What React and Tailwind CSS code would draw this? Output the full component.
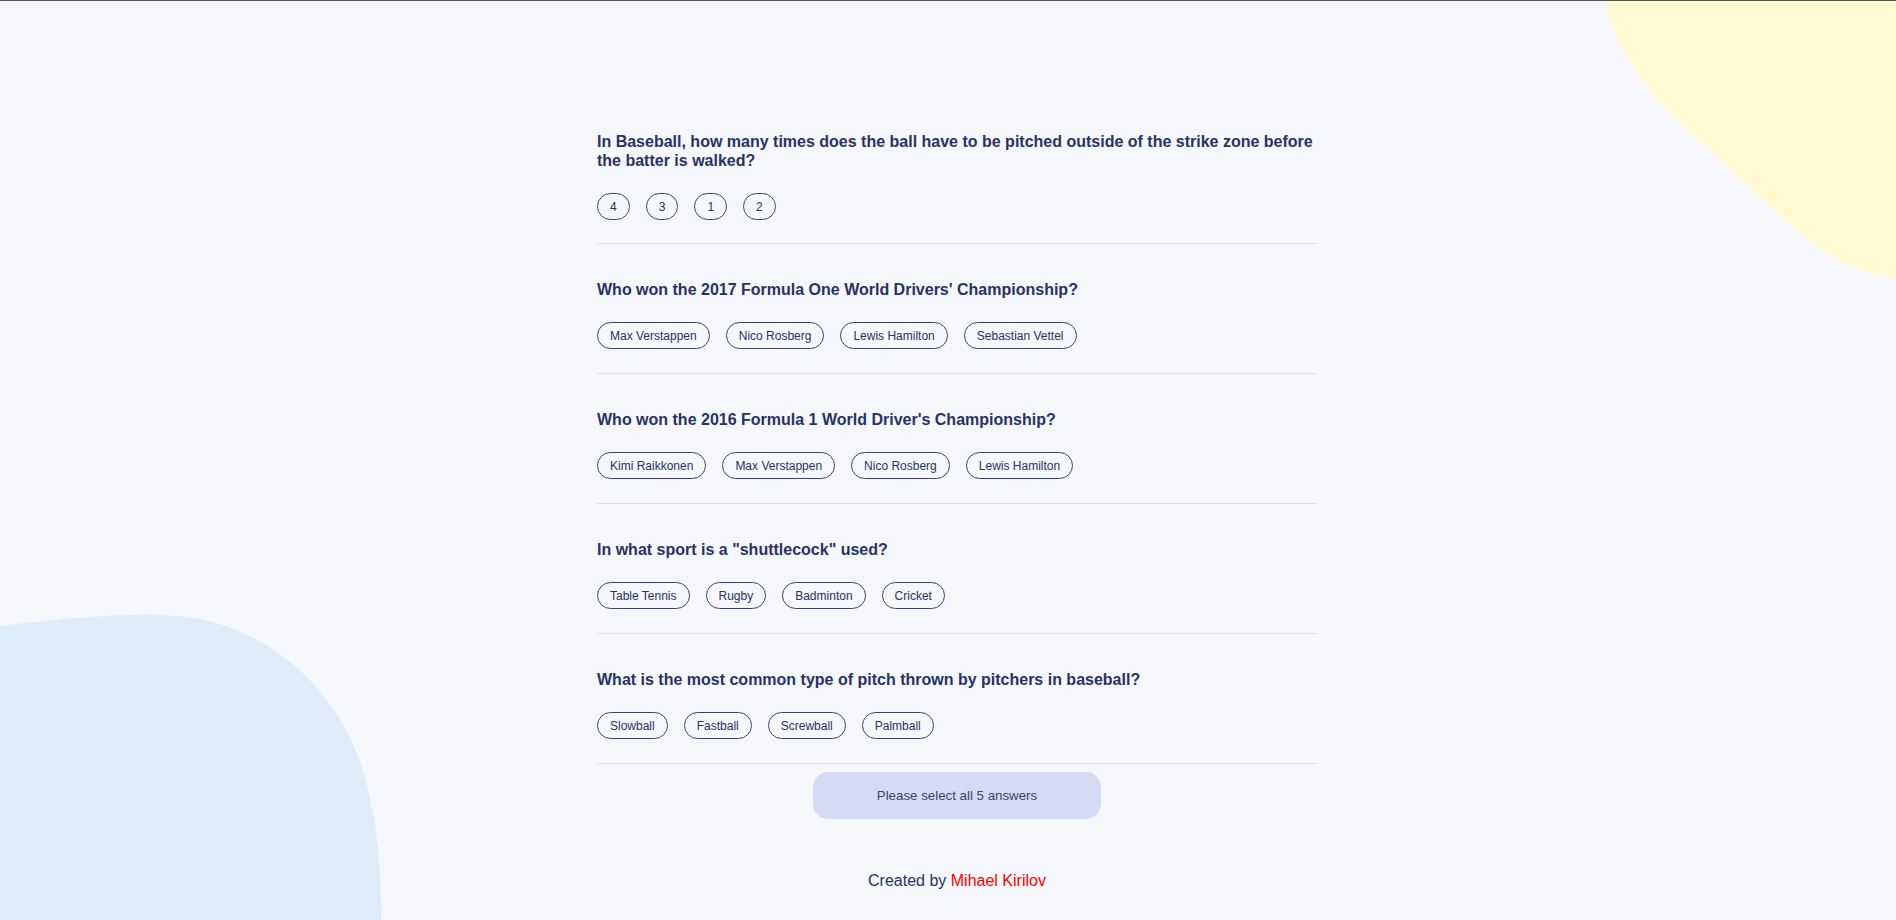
import React from "react"

const questions = [
    {
        q: "In Baseball, how many times does the ball have to be pitched outside of the strike zone before the batter is walked?",
        answers: ["4", "3", "1", "2"],
    },
    {
        q: "Who won the 2017 Formula One World Drivers' Championship?",
        answers: ["Max Verstappen", "Nico Rosberg", "Lewis Hamilton", "Sebastian Vettel"],
    },
    {
        q: "Who won the 2016 Formula 1 World Driver's Championship?",
        answers: ["Kimi Raikkonen", "Max Verstappen", "Nico Rosberg", "Lewis Hamilton"],
    },
    {
        q: 'In what sport is a "shuttlecock" used?',
        answers: ["Table Tennis", "Rugby", "Badminton", "Cricket"],
    },
    {
        q: "What is the most common type of pitch thrown by pitchers in baseball?",
        answers: ["Slowball", "Fastball", "Screwball", "Palmball"],
    },
]

function Question({ item, first }) {
    return (
        <div className={first ? "border-b border-[#DBDEF0] pb-[23px]" : "border-b border-[#DBDEF0] pt-[36px] pb-[24px]"}>
            <h2 className="mb-[23px] text-[16px] font-bold leading-[19px] text-[#293264]">{item.q}</h2>
            <div className="flex gap-4">
                {item.answers.map((a) => (
                    <button
                        key={a}
                        className="rounded-full border border-[#3b4372] bg-transparent px-3 py-[5.5px] text-[12px] leading-[14px] text-[#293264]"
                    >
                        {a}
                    </button>
                ))}
            </div>
        </div>
    )
}

export default function App() {
    return (
        <div className="relative min-h-screen overflow-hidden border-t border-[#555555] bg-[#F5F7FB] font-['Liberation_Sans',Arial,sans-serif] text-[#293264]">
            {/* background blobs */}
            <svg className="pointer-events-none absolute left-0 top-0" width="1896" height="920" viewBox="0 0 1896 920">
                <path
                    d="M1606 0 C1615 45 1640 85 1690 130 L1760 195 C1800 235 1840 270 1896 277 L1896 0 Z"
                    fill="#FFFAD1"
                />
                <path
                    d="M0 625 C60 618 110 613 160 614 C260 616 330 680 360 760 C375 810 381 850 381 920 L0 920 Z"
                    fill="#DEEBF8"
                />
            </svg>

            <main className="relative flex flex-col items-center pl-[18px] pt-[131px]">
                <div className="w-[720px]">
                    {questions.map((item, i) => (
                        <Question key={i} item={item} first={i === 0} />
                    ))}
                    <div className="mt-[8px] flex justify-center">
                        <button className="h-[47px] w-[288px] rounded-[15px] bg-[#D6DBF5] text-[13.3px] text-[#3d4466]">
                            Please select all 5 answers
                        </button>
                    </div>
                </div>
                <p className="mt-[53px] text-[16px] leading-[1.15] text-[#293264]">
                    Created by <span className="text-[#FF0000]">Mihael Kirilov</span>
                </p>
            </main>
        </div>
    )
}
